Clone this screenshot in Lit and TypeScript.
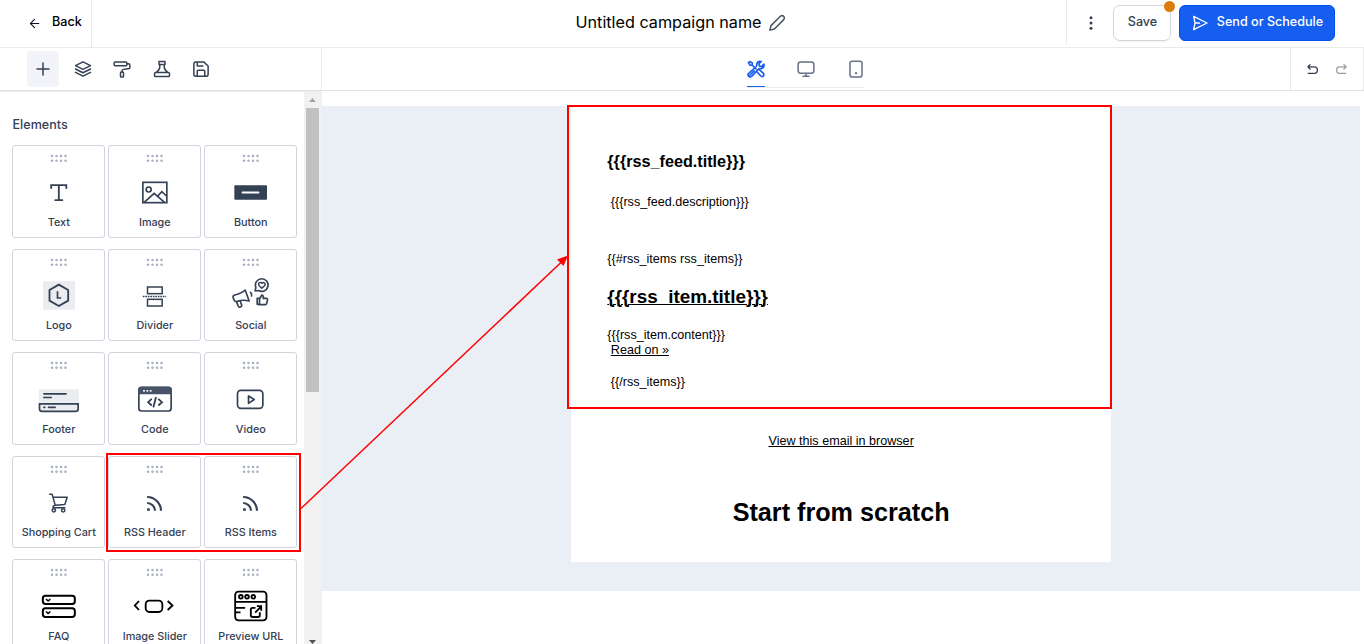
import { LitElement, html, svg, css, type TemplateResult } from "lit";
import { customElement, property } from "lit/decorators.js";

type Icon = TemplateResult;

/* Tile artwork, drawn on a 144 x 108 grid (three units per pixel). */
const tileIcons: Record<string, Icon> = {
  text: svg`<path d="M50 45V36.5H95.500V45M73 36.5V81.500M62.500 81.500H83.500" stroke-width="5.500" stroke-linecap="round"/>`,
  image: svg`<rect x="37" y="28" width="72" height="61" stroke-width="5"/><circle cx="54.500" cy="49.500" r="7.500" stroke-width="5"/><path d="M41 88L71 61L102 88M82 69L94 56L108 69" stroke-width="5"/>`,
  button: svg`<rect x="23.500" y="37" width="98" height="43" rx="3" fill="#344054" stroke="none"/><path d="M48 58.500H96" stroke="#fff" stroke-width="5.500" stroke-linecap="round"/>`,
  logo: svg`<rect x="25.500" y="13" width="96" height="85" rx="2" fill="#eaecf0" stroke="none"/><path d="M73 23L101 39V71L73 87L45 71V39Z" stroke-width="5.500" stroke-linejoin="round"/><path d="M69 43V63H80" stroke-width="5"/>`,
  divider: svg`<rect x="51" y="30" width="44" height="20" stroke-width="4.500"/><rect x="51" y="67" width="44" height="20" stroke-width="4.500"/><path d="M37 58.500H107" stroke-width="4" stroke-dasharray="5 2.500"/>`,
  social: svg`<g stroke-width="5" stroke-linejoin="round" stroke-linecap="round"><path d="M56 39Q46 49 25 54Q18 56 20 62L23 70Q26 75 32 73Q50 67 68 72ZM30 74L35 87Q37 92 42 90Q47 88 45 83L41 72M72 46Q77 50 75 57"/><path d="M86 42L88 31A19 19 0 1 1 96 40.500Z"/><path d="M106 34L98 26Q94 20 99 17Q103 15 106.500 19Q110 15 114 18Q118 21 114 26Z" stroke-width="4.500"/><path d="M92 64H99V82H92ZM99 66L106 54Q112 55 110 64H120Q124 65 123 70L120 80Q119 83 115 83H99"/></g>`,
  footer: svg`<rect x="13" y="28" width="120" height="40" fill="#eaecf0" stroke="none"/><path d="M15 71.500H131V86Q131 94 123 94H23Q15 94 15 86Z" fill="#eaecf0" stroke-width="5"/><path d="M28 41.500H95M28 52.500H50M28 82H31M42 82H62" stroke-width="5" stroke-linecap="round"/>`,
  code: svg`<rect x="25" y="22" width="97" height="71" rx="8" stroke-width="5"/><path d="M23 43V30Q23 20 33 20H114Q124 20 124 30V43Z" fill="#475467" stroke="none"/><path d="M40 32.500H41M50 32.500H51M60 32.500H61" stroke="#fff" stroke-width="5.500" stroke-linecap="round"/><path d="M62 58L53 66.500L62 75M76 53L69 80M85 58L94.500 66.500L85 75" stroke-width="5.500" stroke-linecap="round"/>`,
  video: svg`<rect x="33" y="31" width="76" height="54" rx="10" stroke-width="5"/><path d="M66 47.500V70L83 58.500Z" stroke-width="5" stroke-linejoin="round"/>`,
  cart: svg`<g stroke-width="4.500" stroke-linecap="round" stroke-linejoin="round"><path d="M45.500 31H53L62 63.500M56 39.500H98L91 61.500L62 63.500Q54 65 56 71H91"/><circle cx="58" cy="79" r="5"/><circle cx="86" cy="79" r="5"/></g>`,
  rss: svg`<path d="M50 39A42 42 0 0 1 91.500 80M50 57A24 24 0 0 1 73.500 80" stroke-width="6.500"/><circle cx="54" cy="76.500" r="4.500" fill="#344054" stroke="none"/>`,
  faq: svg`<g stroke="#000" stroke-width="6" stroke-linecap="round" stroke-linejoin="round"><rect x="25" y="26" width="96" height="25" rx="8"/><rect x="25" y="64" width="96" height="26" rx="8"/><path d="M36 37.500L41 42L46 37.500M36 75L41 79.500L46 75" stroke-width="5"/></g>`,
  slider: svg`<g stroke="#000" stroke-width="5.500"><rect x="45.500" y="41" width="50" height="34" rx="11"/><path d="M25.500 42L13 55.500L25.500 69M111.500 42L126 55.500L111.500 69"/></g>`,
  preview: svg`<g stroke="#000" stroke-width="5.500"><rect x="26" y="14" width="94" height="86" rx="10"/><path d="M26 44.500H120M27 62.500H56M27 76H42"/><circle cx="43" cy="29.500" r="5.500"/><circle cx="61.500" cy="29.500" r="5.500"/><circle cx="80.500" cy="29.500" r="5.500"/><path d="M87 62.500H78Q73 62.500 73 67.500V85Q73 90 78 90H95Q100 90 100 85V76M86 77L104 58M91 57.500H104V71"/></g>`,
};

const tiles: [string, string][] = [
  ["text", "Text"], ["image", "Image"], ["button", "Button"],
  ["logo", "Logo"], ["divider", "Divider"], ["social", "Social"],
  ["footer", "Footer"], ["code", "Code"], ["video", "Video"],
  ["cart", "Shopping Cart"], ["rss", "RSS Header"], ["rss", "RSS Items"],
  ["faq", "FAQ"], ["slider", "Image Slider"], ["preview", "Preview URL"],
];

/* Toolbar glyphs on a 24-unit grid. */
const glyphs: Record<string, Icon> = {
  back: svg`<path d="M20 12H4.500M12 4.500L4.500 12L12 19.500"/>`,
  plus: svg`<path d="M12 4V20M4 12H20"/>`,
  layers: svg`<path d="M12 2.500L22 7.500L12 12.500L2 7.500ZM2 12L12 17L22 12M2 16.500L12 21.500L22 16.500"/>`,
  roller: svg`<rect x="1.500" y="2.500" width="17" height="5" rx="1.500"/><path d="M18.500 5H20.500Q22.500 5 22.500 7V9.500Q22.500 11.500 20.500 11.700L14 12.500Q12 12.800 12 14.500V16"/><rect x="10" y="16" width="4" height="6.500" rx="1"/>`,
  flask: svg`<path d="M8 2H16V6H8ZM9 6V9.500Q9 12.500 4.500 16.500H19.500Q15 12.500 15 9.500V6M3.500 16.500H20.500Q22 16.500 22 18.500V20.500Q22 22 20.500 22H3.500Q2 22 2 20.500V18.500Q2 16.500 3.500 16.500Z"/>`,
  disk: svg`<path d="M5 2.500H15.500L21.500 8V19Q21.500 21.500 19 21.500H5Q2.500 21.500 2.500 19V5Q2.500 2.500 5 2.500ZM7 3V8H14.500M7 21V14.500Q7 13.500 8 13.500H16Q17 13.500 17 14.500V21"/>`,
  pencil: svg`<path d="M2.500 21.500L4 15.500L16.500 3Q19 1.300 21 3Q22.700 5 21 7.500L8.500 20Z"/>`,
  tools: svg`<path d="M7 7L12 12M3.500 2L2 3.500L4 7H7V4ZM9.500 14.500L4 20Q2.500 21.500 1.700 20.500Q.5 19 2.500 17.500L12 9Q13.500 7.500 13 5.500Q14 1 19 2L16 5L16.500 8L19.500 8.500L22.500 5.500Q23.500 10.500 18.500 11.500Q16.500 11 15 12.500L6.500 21.500Q4 23.500 2 21.500M13.500 16L18 21Q20 23 21.800 21.500Q23.300 19.500 21.500 17.500L17 13.500" stroke-width="2.200"/>`,
  monitor: svg`<rect x="1.500" y="2.500" width="21" height="15" rx="3.500"/><path d="M12 18V21M8 21.500H16"/>`,
  phone: svg`<rect x="4" y="1.500" width="16" height="21" rx="2.500"/><path d="M12 17.500H12.100" stroke-width="2.800"/>`,
  undo: svg`<path d="M7.500 3L3.500 7L7.500 11M4 7H15.500Q21 7 21 13Q21 19 15.500 19H4" stroke-width="2.400"/>`,
  redo: svg`<path d="M16.500 3L20.500 7L16.500 11M20 7H8.500Q3 7 3 13Q3 19 8.500 19H20" stroke-width="2.400"/>`,
  send: svg`<path d="M2.500 2L22.500 12L2.500 22L4.500 12ZM4.500 12H11.500"/>`,
};

@customElement("ui-glyph")
export class UiGlyph extends LitElement {
  static styles = css`
    :host { display: inline-flex; width: 18px; height: 18px; flex: none; }
    svg { width: 100%; height: 100%; fill: none; stroke: currentColor; stroke-width: 2; stroke-linecap: round; stroke-linejoin: round; overflow: visible; }
  `;
  @property() name = "";
  render() {
    return html`<svg viewBox="0 0 24 24">${glyphs[this.name]}</svg>`;
  }
}

@customElement("element-tile")
export class ElementTile extends LitElement {
  static styles = css`
    :host { display: flex; flex-direction: column; align-items: center; box-sizing: border-box; width: 93px; height: 92.5px; padding-top: 8px; border: 1px solid #d0d5dd; border-radius: 3px; background: #fff; }
    .grip { width: 17px; height: 9px; fill: #a6aec2; }
    .art { width: 48px; height: 36px; margin: 10px 0 0 0; fill: none; stroke: #344054; overflow: visible; }
    .art > * { transform: translateX(-1.5px); }
    .label { margin: 5.7px 0 0 .6px; font: 500 10.8px/16px Inter, sans-serif; color: #344054; white-space: nowrap; }
  `;
  @property() icon = "";
  @property() label = "";
  render() {
    return html`
      <svg class="grip" viewBox="0 0 17 9">
        ${[2, 6.5, 11, 15.5].map((x) => [2, 6.8].map((y) => svg`<circle cx=${x} cy=${y} r="1.250"/>`))}
      </svg>
      <svg class="art" viewBox="0 0 144 108">${tileIcons[this.icon]}</svg>
      <span class="label">${this.label}</span>
    `;
  }
}

@customElement("email-preview")
export class EmailPreview extends LitElement {
  static styles = css`
    :host { display: block; box-sizing: border-box; width: 540px; height: 456px; padding: 43px 36px 0 36.3px; background: #fff; color: #000; font: 12.6px/20px "Liberation Sans", Arial, sans-serif; white-space: pre-wrap; }
    h1, h2, h3, p { margin: 0; }
    h3 { font-size: 16.2px; line-height: 24px; }
    h2 { margin-top: 14px; font-size: 18.9px; line-height: 27px; text-decoration: underline 1px; text-underline-offset: 1px; }
    h1 { margin-top: 43px; font-size: 25.2px; line-height: 36px; text-align: center; }
    .description { margin-top: 19px; }
    .open { margin-top: 37px; }
    .content { margin-top: 18px; line-height: 15px; }
    .close { margin-top: 14px; }
    .browser { margin-top: 39px; text-align: center; }
    .link { text-decoration: underline; }
  `;
  render() {
    return html`<h3>{{{rss_feed.title}}}</h3><p class="description">&nbsp;{{{rss_feed.description}}}</p><p class="open">{{#rss_items rss_items}}</p><h2>{{{rss_item.title}}}</h2><p class="content">{{{rss_item.content}}}<br>&nbsp;<span class="link">Read on »</span></p><p class="close">&nbsp;{{/rss_items}}</p><p class="browser"><span class="link">View this email in browser</span></p><h1>Start from scratch</h1>`;
  }
}

@customElement("app-root")
export class AppRoot extends LitElement {
  static styles = css`
    :host { position: relative; display: flex; flex-direction: column; width: 1364px; height: 644px; overflow: hidden; background: #fff; color: #344054; font-family: Inter, sans-serif; }
    * { box-sizing: border-box; }
    .top { display: grid; grid-template-columns: 92px 1fr 298px; height: 48px; flex: none; border-bottom: 1px solid #eaeaea; }
    .back { display: flex; align-items: center; padding: 0 0 3px 28px; border-right: 1px solid #eaeaea; color: #000; font: 500 12.6px/18px Inter, sans-serif; }
    .back ui-glyph { width: 13px; height: 13px; margin: 3px 11px 0 0; color: #101828; }
    .name { display: flex; align-items: center; padding: 0 0 3px 483.5px; color: #000; font-size: 16.2px; line-height: 24px; white-space: nowrap; }
    .name ui-glyph { margin: 2px 0 0 6.5px; width: 18px; height: 18px; color: #475467; }
    .actions { display: flex; height: 45px; padding-top: 5px; border-left: 1px solid #eaeaea; }
    .more { width: 4px; height: 36px; margin: 0 20px 0 22px; fill: #344054; }
    .btn { display: flex; align-items: center; justify-content: center; height: 36px; padding: 0 0 2px 1px; border: 1px solid #d0d5dd; border-radius: 7px; font: 500 12.6px/18px Inter, sans-serif; white-space: nowrap; }
    .save { position: relative; width: 58px; box-shadow: 0 1px 2px rgba(16, 24, 40, .05); }
    .badge { position: absolute; top: -5px; right: -5px; width: 11px; height: 11px; border-radius: 50%; background: #dc7c0a; }
    .send { width: 156px; margin-left: 8px; gap: 9px; border-color: #004eeb; border-radius: 6px; background: #155eef; color: #fff; }
    .send ui-glyph { width: 16px; height: 16px; margin-top: 2px; }
    .bar { display: flex; height: 43px; flex: none; border-bottom: 1px solid #e2e2e4; }
    .tabs { display: flex; align-items: flex-start; width: 322px; padding: 3px 0 0 27px; border-right: 1px solid #eaeaea; }
    .tab { display: flex; align-items: center; justify-content: center; width: 32px; height: 36px; margin-right: 7.5px; border-radius: 3px; }
    .tab.active { background: #f2f4f9; }
    .modes { display: flex; flex: 1; justify-content: flex-start; padding-left: 425px; }
    .mode-list { display: flex; gap: 32px; width: 118px; height: 40px; border-bottom: 1px solid #ececef; color: #667085; }
    .mode { display: flex; align-items: center; width: 18px; height: 39px; padding-top: 3px; }
    .mode.active { border-bottom: 1px solid #155eef; color: #155eef; }
    .history { display: flex; align-items: center; gap: 16.5px; width: 74px; padding-left: 14.5px; border: 0 solid #eaeaea; border-width: 0 1px; }
    .history ui-glyph { width: 13px; height: 13px; }
    .history .off { opacity: .5; }
    .body { display: flex; flex: 1; min-height: 0; }
    .side { display: flex; width: 322px; border-top: 1px solid #ededed; border-right: 1px solid #eeeff1; overflow: hidden; }
    .panel { width: 304px; height: 552px; padding: 23px 0 0 12px; overflow: hidden; }
    .heading { font: 500 12.6px/20px Inter, sans-serif; padding-left: .5px; }
    .tiles { display: grid; grid-template-columns: repeat(3, 93px); gap: 11px 3px; margin-top: 10px; }
    .scroll { display: flex; flex-direction: column; align-items: center; width: 17px; height: 552px; background: #f1f1f1; }
    .arrow { width: 7px; height: 4px; }
    .up { margin-top: 6px; fill: #a3a3a3; }
    .down { margin-top: 248px; fill: #505050; }
    .thumb { width: 13px; height: 284px; margin-top: 6px; background: #c1c1c1; }
    .canvas { display: flex; justify-content: flex-start; width: 1038px; height: 485px; margin-top: 15px; padding-left: 249px; background: #eaeff6; }
    .marks { position: absolute; inset: 0; width: 1364px; height: 644px; pointer-events: none; fill: none; stroke: #ff0000; }
  `;
  render() {
    return html`
      <header class="top">
        <div class="back"><ui-glyph name="back"></ui-glyph>Back</div>
        <div class="name">Untitled campaign name<ui-glyph name="pencil"></ui-glyph></div>
        <div class="actions">
          <svg class="more" viewBox="0 0 4 36"><circle cx="2" cy="12.800" r="1.500"/><circle cx="2" cy="18" r="1.500"/><circle cx="2" cy="23.300" r="1.500"/></svg>
          <div class="btn save">Save<span class="badge"></span></div>
          <div class="btn send"><ui-glyph name="send"></ui-glyph>Send or Schedule</div>
        </div>
      </header>
      <nav class="bar">
        <div class="tabs">
          ${["plus", "layers", "roller", "flask", "disk"].map((n, i) => html`<div class="tab ${i ? "" : "active"}"><ui-glyph name=${n}></ui-glyph></div>`)}
        </div>
        <div class="modes">
          <div class="mode-list">
            ${["tools", "monitor", "phone"].map((n, i) => html`<div class="mode ${i ? "" : "active"}"><ui-glyph name=${n}></ui-glyph></div>`)}
          </div>
        </div>
        <div class="history"><ui-glyph name="undo"></ui-glyph><ui-glyph class="off" name="redo"></ui-glyph></div>
      </nav>
      <main class="body">
        <aside class="side">
          <div class="panel">
            <div class="heading">Elements</div>
            <div class="tiles">${tiles.map(([icon, label]) => html`<element-tile icon=${icon} label=${label}></element-tile>`)}</div>
          </div>
          <div class="scroll">
            <svg class="arrow up" viewBox="0 0 7 4"><path d="M0 4L3.500 0L7 4Z"/></svg>
            <div class="thumb"></div>
            <svg class="arrow down" viewBox="0 0 7 4"><path d="M0 0L3.500 4L7 0Z"/></svg>
          </div>
        </aside>
        <section class="canvas"><email-preview></email-preview></section>
      </main>
      <svg class="marks" viewBox="0 0 1364 644">
        <rect x="107" y="454" width="193" height="97" stroke-width="2"/>
        <rect x="568" y="106" width="543" height="302" stroke-width="2"/>
        <path d="M301 508.500L562 261.500" stroke-width="1.500"/>
        <path d="M568 255.500L563.500 266L557 259.500Z" fill="#ff0000" stroke="none"/>
      </svg>
    `;
  }
}
